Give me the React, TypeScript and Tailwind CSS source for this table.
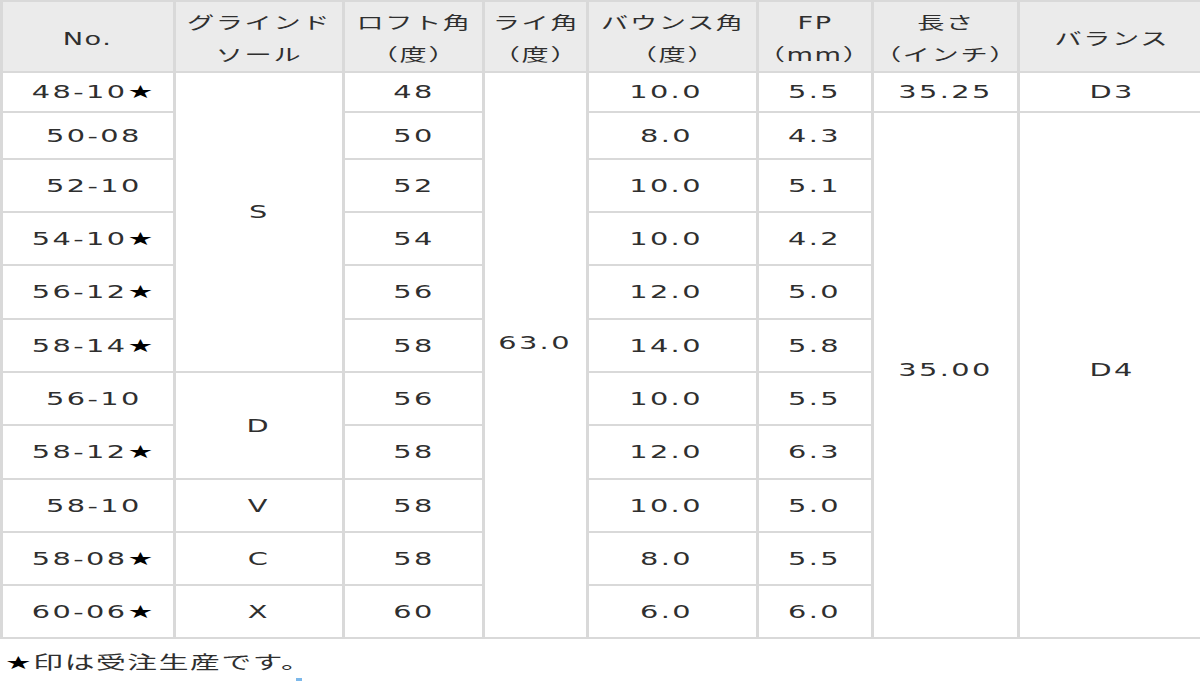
import type { ReactNode } from "react";

type Span = { text: string; span: number; pad?: string };

interface Row {
  no: string;
  star?: boolean;
  grind?: Span;
  loft: string;
  lie?: Span;
  bounce: string;
  fp: string;
  len?: Span;
  bal?: Span;
  h: string;
}

const rows: Row[] = [
  { no: "48-10", star: true, grind: { text: "S", span: 6, pad: "pb-[20px]" }, loft: "48", lie: { text: "63.0", span: 11, pad: "pb-[24px]" }, bounce: "10.0", fp: "5.5", len: { text: "35.25", span: 1 }, bal: { text: "D3", span: 1 }, h: "h-[40px]" },
  { no: "50-08", loft: "50", bounce: "8.0", fp: "4.3", len: { text: "35.00", span: 10, pad: "pb-[10px]" }, bal: { text: "D4", span: 10, pad: "pb-[10px]" }, h: "h-[47px]" },
  { no: "52-10", loft: "52", bounce: "10.0", fp: "5.1", h: "h-[53px]" },
  { no: "54-10", star: true, loft: "54", bounce: "10.0", fp: "4.2", h: "h-[53px]" },
  { no: "56-12", star: true, loft: "56", bounce: "12.0", fp: "5.0", h: "h-[54px]" },
  { no: "58-14", star: true, loft: "58", bounce: "14.0", fp: "5.8", h: "h-[53px]" },
  { no: "56-10", grind: { text: "D", span: 2 }, loft: "56", bounce: "10.0", fp: "5.5", h: "h-[53px]" },
  { no: "58-12", star: true, loft: "58", bounce: "12.0", fp: "6.3", h: "h-[54px]" },
  { no: "58-10", grind: { text: "V", span: 1 }, loft: "58", bounce: "10.0", fp: "5.0", h: "h-[53px]" },
  { no: "58-08", star: true, grind: { text: "C", span: 1 }, loft: "58", bounce: "8.0", fp: "5.5", h: "h-[53px]" },
  { no: "60-06", star: true, grind: { text: "X", span: 1 }, loft: "60", bounce: "6.0", fp: "6.0", h: "h-[53px]" },
];

const cell = "border-x-[3px] border-y-2 border-solid border-[#d9d9d9] p-0 text-center align-middle";

// body values are set a little larger than the header, as in the reference
function Wide({ children }: { children: ReactNode }) {
  return <span className="inline-block scale-x-[1.6] text-[18px] tracking-[1.5px]">{children}</span>;
}

function HeadText({ children }: { children: ReactNode }) {
  return <span className="inline-block scale-x-[1.6] tracking-[1px]">{children}</span>;
}

function Head({ top, bottom }: { top: string; bottom?: string }) {
  return (
    <th className={`${cell} bg-[#ebebeb] pt-[5px] font-normal leading-[32px]`}>
      <HeadText>{top}</HeadText>
      {bottom && (
        <>
          <br />
          <HeadText>{bottom}</HeadText>
        </>
      )}
    </th>
  );
}

export default function App() {
  return (
    <div className="h-[681px] w-[1200px] overflow-hidden bg-white font-['DejaVu_Sans','Noto_Sans_CJK_JP',sans-serif] text-[17px] text-[#2f2f2f]">
      <table className="w-[1204px] table-fixed border-collapse">
        <colgroup>
          <col className="w-[173px]" />
          <col className="w-[169px]" />
          <col className="w-[140px]" />
          <col className="w-[104px]" />
          <col className="w-[170px]" />
          <col className="w-[115px]" />
          <col className="w-[146px]" />
          <col className="w-[187px]" />
        </colgroup>
        <thead>
          <tr className="h-[68px]">
            <Head top="No." />
            <Head top="グラインド" bottom="ソール" />
            <Head top="ロフト角" bottom="（度）" />
            <Head top="ライ角" bottom="（度）" />
            <Head top="バウンス角" bottom="（度）" />
            <Head top="FP" bottom="（mm）" />
            <Head top="長さ" bottom="（インチ）" />
            <Head top="バランス" />
          </tr>
        </thead>
        <tbody>
          {rows.map((r) => (
            <tr key={r.no + r.loft + r.bounce} className={r.h}>
              <td className={`${cell} pl-[12px]`}>
                <Wide>
                  {r.no}
                  {r.star && <span className="text-black">★</span>}
                </Wide>
              </td>
              {r.grind && (
                <td rowSpan={r.grind.span} className={`${cell} ${r.grind.pad ?? ""}`}>
                  <Wide>{r.grind.text}</Wide>
                </td>
              )}
              <td className={cell}>
                <Wide>{r.loft}</Wide>
              </td>
              {r.lie && (
                <td rowSpan={r.lie.span} className={`${cell} ${r.lie.pad ?? ""}`}>
                  <Wide>{r.lie.text}</Wide>
                </td>
              )}
              <td className={`${cell} pr-[12px]`}>
                <Wide>{r.bounce}</Wide>
              </td>
              <td className={cell}>
                <Wide>{r.fp}</Wide>
              </td>
              {r.len && (
                <td rowSpan={r.len.span} className={`${cell} ${r.len.pad ?? ""}`}>
                  <Wide>{r.len.text}</Wide>
                </td>
              )}
              {r.bal && (
                <td rowSpan={r.bal.span} className={`${cell} ${r.bal.pad ?? ""}`}>
                  <Wide>{r.bal.text}</Wide>
                </td>
              )}
            </tr>
          ))}
        </tbody>
      </table>

      {/* note */}
      <p className="mt-[12px] pl-[5px] text-[18px] leading-[24px]">
        <span className="inline-block origin-left scale-x-[1.65] tracking-[1px]">
          <span className="text-black">★</span>印は受注生産です。
        </span>
      </p>
      <div className="ml-[296px] mt-[3px] h-[4px] w-[6px] bg-[#7cb8ea]" />
    </div>
  );
}
